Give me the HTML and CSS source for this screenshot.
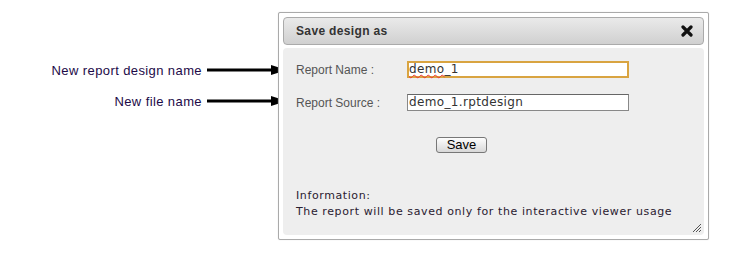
FILE: index.html
```html
<!DOCTYPE html>
<html>
<head>
<meta charset="utf-8">
<link rel="stylesheet" href="styles.css">
</head>
<body>
<div class="page">
  <div class="callouts">
    <div class="callout c1">
      <span class="ctext">New report design name</span>
      <svg class="arrow" width="80" height="10" viewBox="0 0 80 10"><line x1="0" y1="5" x2="66" y2="5" stroke="#000" stroke-width="3"/><polygon points="64,0 80,5 64,10" fill="#000"/></svg>
    </div>
    <div class="callout c2">
      <span class="ctext">New file name</span>
      <svg class="arrow" width="80" height="10" viewBox="0 0 80 10"><line x1="0" y1="5" x2="66" y2="5" stroke="#000" stroke-width="3"/><polygon points="64,0 80,5 64,10" fill="#000"/></svg>
    </div>
  </div>
  <div class="dialog">
    <div class="titlebar">
      <span class="title">Save design as</span>
      <svg class="close" width="12" height="12" viewBox="0 0 12 12"><path d="M2 2 L10 10 M10 2 L2 10" stroke="#111" stroke-width="3.2" stroke-linecap="round"/></svg>
    </div>
    <div class="body">
      <div class="row r1">
        <span class="label">Report Name :</span>
        <span class="input focus"><span class="sq">demo</span>_1</span>
      </div>
      <div class="row r2">
        <span class="label">Report Source :</span>
        <span class="input">demo_1.rptdesign</span>
      </div>
      <div class="btnrow"><span class="btn">Save</span></div>
      <div class="info">
        <div>Information:</div>
        <div>The report will be saved only for the interactive viewer usage</div>
      </div>
      <svg class="grip" width="12" height="12" viewBox="0 0 12 12"><path d="M11 3 L3 11 M11 6 L6 11 M11 9 L9 11" stroke="#555" stroke-width="1"/></svg>
    </div>
  </div>
</div>
</body>
</html>
```
FILE: styles.css
```css
html, body { margin: 0; padding: 0; background: #fff; }
.page { display: flex; width: 735px; height: 272px; }
.callouts { width: 278px; padding-top: 61px; box-sizing: border-box; }
.callout { display: flex; align-items: center; justify-content: flex-end; height: 18px; padding-right: 0; }
.c2 { margin-top: 13px; }
.ctext { font-family: "Liberation Sans", Arial, sans-serif; font-size: 13px; letter-spacing: 0.4px; color: #1c0a48; margin-right: 5px; }
.arrow { display: block; margin-right: -9px; }
.dialog { margin-top: 12px; width: 431px; height: 228px; box-sizing: border-box; border: 1px solid #aaa; border-radius: 2px; padding: 4px; background: #fff; box-shadow: 0 0 1px #ccc; display: flex; flex-direction: column; gap: 3px; }
.titlebar { height: 28px; box-sizing: border-box; border: 1px solid #aaa; border-radius: 4px; background: linear-gradient(#eaeaea, #d0d0d0); display: flex; align-items: center; justify-content: space-between; padding: 0 10px 0 12px; }
.title { font-family: "Liberation Sans", Arial, sans-serif; font-weight: bold; font-size: 12px; letter-spacing: 0.35px; color: #333; }
.body { flex: 1; position: relative; background: #eee; border-radius: 4px; padding: 13px 0 0 13px; box-sizing: border-box; }
.row { display: flex; align-items: center; height: 17px; }
.r2 { margin-top: 16px; }
.label { width: 111px; font-family: "Liberation Sans", Arial, sans-serif; font-size: 12px; color: #555; }
.input { width: 222px; height: 17px; box-sizing: border-box; border: 1px solid #888; border-top-color: #666; background: #fff; font-family: "DejaVu Sans", Verdana, sans-serif; font-size: 12px; letter-spacing: 0.35px; color: #333; line-height: 15px; padding-left: 1px; }
.input.focus { border: 2px solid #d9a441; line-height: 13px; padding-left: 0; }
.sq { text-decoration: underline wavy #e33; text-decoration-thickness: 1px; text-underline-offset: 1px; }
.btnrow { display: flex; padding-left: 140px; margin-top: 26px; }
.btn { width: 51px; height: 16px; box-sizing: border-box; border: 1px solid #777; border-radius: 3px; background: linear-gradient(#fdfdfd, #d8d8d8); font-family: "Liberation Sans", Arial, sans-serif; font-size: 13px; color: #000; text-align: center; line-height: 14px; }
.info { margin-top: 35px; font-family: "DejaVu Sans", Verdana, sans-serif; font-size: 11px; letter-spacing: 0.6px; color: #2a2030; line-height: 16px; }
.grip { position: absolute; right: 2px; bottom: 2px; }
```
